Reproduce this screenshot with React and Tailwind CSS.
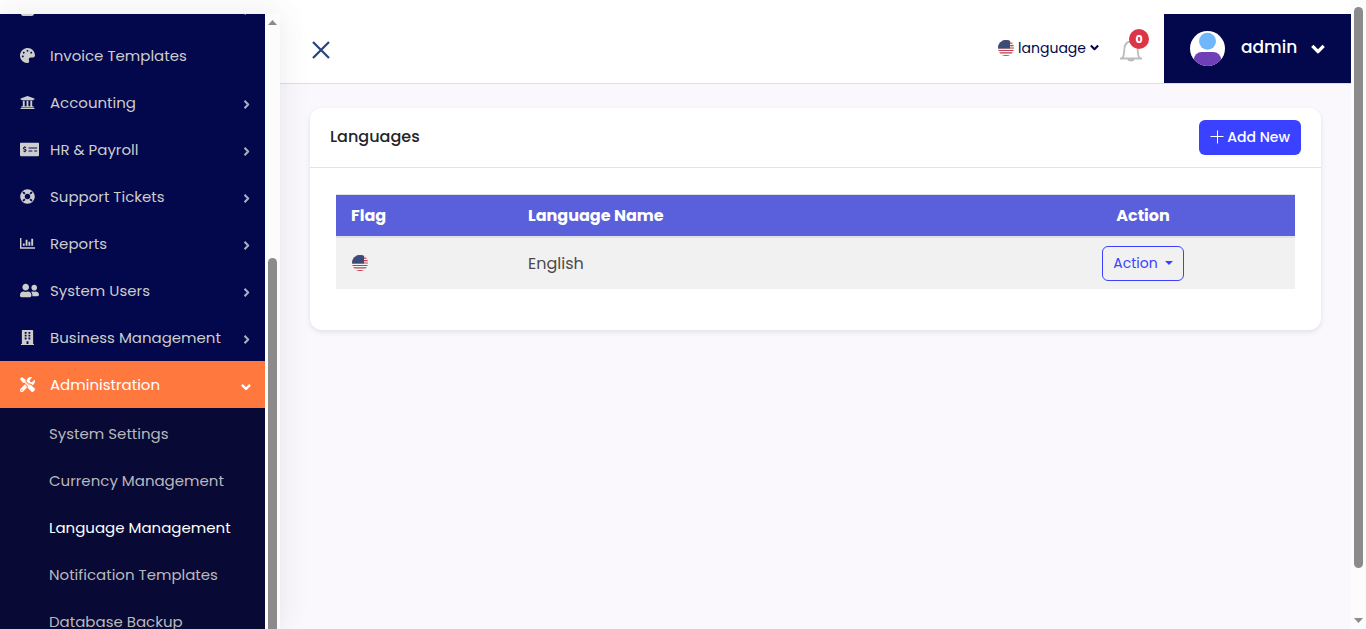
import {
  FaBuilding,
  FaLifeRing,
  FaMoneyCheckAlt,
  FaPalette,
  FaShoppingBag,
  FaTools,
  FaUniversity,
  FaUserFriends,
} from 'react-icons/fa';

const menu = [
  { label: 'Purchases', icon: FaShoppingBag, arrow: true },
  { label: 'Invoice Templates', icon: FaPalette },
  { label: 'Accounting', icon: FaUniversity, arrow: true },
  { label: 'HR & Payroll', icon: FaMoneyCheckAlt, arrow: true, wide: true },
  { label: 'Support Tickets', icon: FaLifeRing, arrow: true },
  { label: 'Reports', icon: BarsIcon, arrow: true },
  { label: 'System Users', icon: FaUserFriends, arrow: true, wide: true },
  { label: 'Business Management', icon: FaBuilding, arrow: true },
];

const submenu = [
  'System Settings',
  'Currency Management',
  'Language Management',
  'Notification Templates',
  'Database Backup',
];

function BarsIcon({ className }) {
  return (
    <svg viewBox="0 0 16 16" className={className} fill="currentColor" aria-hidden="true">
      <path d="M0 2h1.500v10H16v1.500H0z" />
      <path d="M3 8h2v2.500H3zM6 4h2v6.500H6zM9 6h2v4.500H9zM12 3h2v7.500h-2z" />
    </svg>
  );
}

function Chevron({ className }) {
  return (
    <svg
      viewBox="0 0 16 16"
      className={className}
      fill="none"
      stroke="currentColor"
      strokeWidth="3.800"
      strokeLinejoin="round"
      aria-hidden="true"
    >
      <path d="M1.500 4.500L8 11l6.500-6.500" />
    </svg>
  );
}

function Flag({ id }) {
  return (
    <svg viewBox="0 0 16 16" className="size-4 shrink-0" role="img" aria-label="US flag">
      <clipPath id={id}>
        <circle cx="8" cy="8" r="8" />
      </clipPath>
      <g clipPath={`url(#${id})`}>
        <path fill="#f5f5f5" d="M0 0h16v16H0z" />
        <path
          fill="#c0404f"
          d="M0 0h16v1.200H0zM0 2.500h16v1.200H0zM0 5h16v1.200H0zM0 7.400h16v1.200H0zM0 10h16v1H0zM0 12.300h16v1.200H0zM0 15h16v1H0z"
        />
        <path fill="#3b4b78" d="M0 0h12v8.600H0z" />
      </g>
    </svg>
  );
}

function Sidebar() {
  return (
    <div className="relative z-10 flex w-[280px] shrink-0 bg-[#fcfcfc] shadow-[0_0_28px_rgba(82,85,92,0.12)]">
      <nav className="flex-1 overflow-hidden bg-[#02084b] text-[15px] leading-[23px] text-[#cdcdcd]">
        <ul className="-mt-[29px]">
          {menu.map(({ label, icon: Icon, arrow, wide }) => (
            <li key={label}>
              <a href="#" className="flex h-[47px] items-center pr-[14px] pl-5">
                <span className="w-[30px]">
                  <Icon className={wide ? 'size-[19px]' : 'size-[15px]'} />
                </span>
                <span className="flex-1">{label}</span>
                {arrow && <Chevron className="mt-1 size-[9px] -rotate-90 text-[#a5aec0]" />}
              </a>
            </li>
          ))}
          <li className="bg-[#080a35]">
            <a href="#" className="flex h-[47px] items-center bg-[#ff793f] pr-[14px] pl-5 text-white">
              <span className="w-[30px]">
                <FaTools className="size-[15px]" />
              </span>
              <span className="flex-1">Administration</span>
              <Chevron className="mt-1 size-[10px]" />
            </a>
            <ul className="pt-[2px]">
              {submenu.map((label) => (
                <li key={label}>
                  <a
                    href="#"
                    className={
                      label === 'Language Management'
                        ? 'flex h-[47px] items-center pl-[49px] text-white'
                        : 'flex h-[47px] items-center pl-[49px] text-[#b9b9bd]'
                    }
                  >
                    {label}
                  </a>
                </li>
              ))}
            </ul>
          </li>
        </ul>
      </nav>
      <div className="w-[15px] overflow-hidden px-[3px] pt-[6px]">
        <svg viewBox="0 0 9 5" className="h-[5px] w-[9px]" fill="#8b8b8b" aria-hidden="true">
          <path d="M0 5l4.500-5L9 5z" />
        </svg>
        <div className="mt-[233px] h-full w-[9px] rounded-t-full bg-[#8b8b8b]" />
      </div>
    </div>
  );
}

function Header() {
  return (
    <header className="flex h-[70px] items-stretch border-b border-[#dcdce6] bg-white">
      <div className="flex flex-1 items-center pt-[2px] pl-8">
        <button type="button" aria-label="Close menu">
          <svg viewBox="0 0 18 18" className="size-[18px]" fill="none" stroke="#27427f" strokeWidth="2.200" aria-hidden="true">
            <path d="M1 1l16 16M17 1L1 17" />
          </svg>
        </button>
      </div>
      <button type="button" className="flex items-center gap-1 pb-[2px] text-sm text-[#02084b]">
        <Flag id="flag-header" />
        <span>language</span>
        <Chevron className="size-[9px]" />
      </button>
      <button type="button" aria-label="Notifications" className="relative mr-[21px] ml-5 flex items-center pt-[2px]">
        <svg viewBox="0 0 24 24" className="size-6" fill="none" stroke="#bdbdbd" strokeWidth="1.800" aria-hidden="true">
          <path d="M1 20.500h22M3.500 20c2-3 1.500-6 2-10 .5-4 3-6.500 6.500-6.500s6 2.500 6.500 6.500c.5 4 0 7 2 10" />
          <path fill="#bdbdbd" stroke="none" d="M8.500 21h7a3.500 2.500 0 01-7 0z" />
        </svg>
        <span className="absolute top-[15px] left-[10px] flex size-5 items-center justify-center rounded-full bg-[#dc3545] text-[11px] font-bold text-white">
          0
        </span>
      </button>
      <button type="button" className="flex w-[187px] items-center bg-[#02084b] pl-[26px] text-white">
        <svg viewBox="0 0 36 36" className="size-[35px]" aria-hidden="true">
          <clipPath id="avatar">
            <circle cx="18" cy="18" r="18" />
          </clipPath>
          <g clipPath="url(#avatar)">
            <path fill="#fff" d="M0 0h36v36H0z" />
            <circle cx="18" cy="10.500" r="8.700" fill="#6fb6fc" />
            <rect x="4" y="21.500" width="28" height="24" rx="8" fill="#6f3fb5" />
          </g>
        </svg>
        <span className="ml-4 pb-[2px] text-[17px] font-medium">admin</span>
        <Chevron className="ml-[14px] size-[14px]" />
      </button>
    </header>
  );
}

function LanguagesCard() {
  return (
    <section className="mx-[30px] mt-6 rounded-xl bg-white pb-[41px] shadow-[0_2px_5px_rgba(60,60,90,0.12)]">
      <div className="flex h-[60px] items-center justify-between border-b border-[#e3e3e7] px-5">
        <h1 className="pb-[2px] text-base font-medium text-[#212529]">Languages</h1>
        <button
          type="button"
          className="flex h-[35px] items-center gap-[3px] rounded-md bg-[#3a42ff] px-[11px] pb-[2px] text-sm font-medium text-white"
        >
          <svg viewBox="0 0 14 14" className="size-[14px]" stroke="currentColor" strokeWidth="1" aria-hidden="true">
            <path d="M7.500 0.500v13M0.500 6.500h13" />
          </svg>
          Add New
        </button>
      </div>
      <div className="px-[26px] pt-[26px]">
        <table className="w-full table-fixed border-collapse">
          <thead>
            <tr className="h-[42px] border-t border-b-2 border-[#dee2e6] bg-[#5a5fdc] text-base text-white">
              <th className="w-[176px] pt-[2px] pl-[15px] text-left font-bold">Flag</th>
              <th className="pt-[2px] pl-4 text-left font-bold">Language Name</th>
              <th className="w-[304px] pt-[2px] font-bold">Action</th>
            </tr>
          </thead>
          <tbody>
            <tr className="h-[52px] bg-[#f1f1f1] text-base text-[#4a4a4a]">
              <td className="pl-4">
                <Flag id="flag-row" />
              </td>
              <td className="pt-[2px] pl-4">English</td>
              <td className="text-center">
                <button
                  type="button"
                  className="inline-flex h-[35px] items-center gap-[7px] rounded-md border border-[#3a42ff] px-[10px] text-sm text-[#3a42ff]"
                >
                  Action
                  <svg viewBox="0 0 8 4" className="mb-px h-1 w-2" fill="currentColor" aria-hidden="true">
                    <path d="M0 0h8L4 4z" />
                  </svg>
                </button>
              </td>
            </tr>
          </tbody>
        </table>
      </div>
    </section>
  );
}

export default function App() {
  return (
    <div className="flex h-screen overflow-hidden bg-white pt-[14px] font-['Poppins','Inter',sans-serif]">
      <Sidebar />
      <div className="flex min-w-0 flex-1 flex-col">
        <Header />
        <main className="flex-1 bg-[#faf8fc]">
          <LanguagesCard />
        </main>
      </div>
      <div className="-mt-[14px] flex w-[15px] shrink-0 flex-col items-center justify-between bg-[#fcfcfc] pt-[7px] pb-[6px]">
        <div className="h-[91%] w-[9px] rounded-full bg-[#8b8b8b]" />
        <svg viewBox="0 0 9 5" className="h-[5px] w-[9px]" fill="#8b8b8b" aria-hidden="true">
          <path d="M0 0h9L4.500 5z" />
        </svg>
      </div>
    </div>
  );
}
